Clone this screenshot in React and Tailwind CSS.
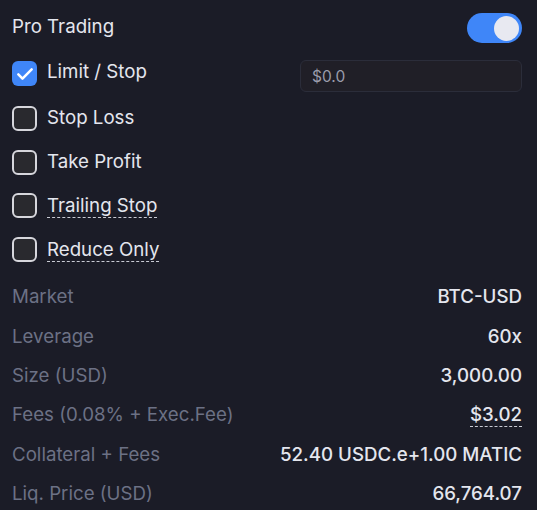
import React, { useState } from 'react'

const font = { fontFamily: 'Inter, "Noto Sans", sans-serif' }

const Check = ({ checked, onChange }) => (
  <button
    type="button"
    onClick={onChange}
    className={`w-[25px] h-[25px] shrink-0 rounded-[6px] flex items-center justify-center ${
      checked ? 'bg-[#3f86f8]' : 'bg-[#29292e] border-2 border-[#d6d6dc]'
    }`}
  >
    {checked && (
      <svg width="20" height="20" viewBox="0 0 24 24" fill="none" stroke="#ffffff" strokeWidth="3" strokeLinecap="round" strokeLinejoin="round">
        <path d="M4 12.5l5 5L20 6.5" />
      </svg>
    )}
  </button>
)

const Row = ({ label, value, dashed }) => (
  <div className="flex items-center justify-between h-[39.4px]">
    <span className="text-[#6c7185]">{label}</span>
    <span className={`text-[#e4e6ee] font-medium ${dashed ? 'border-b border-dashed border-[#c9cbd4] leading-[22px]' : ''}`}>
      {value}
    </span>
  </div>
)

const App = () => {
  const [pro, setPro] = useState(true)
  const [opts, setOpts] = useState({ limit: true, sl: false, tp: false, trailing: false, reduce: false })
  const toggle = (k) => setOpts({ ...opts, [k]: !opts[k] })

  const items = [
    { key: 'sl', label: 'Stop Loss' },
    { key: 'tp', label: 'Take Profit' },
    { key: 'trailing', label: 'Trailing Stop', dashed: true },
    { key: 'reduce', label: 'Reduce Only', dashed: true },
  ]

  return (
    <div className="min-h-screen w-full bg-[#1b1c27] pl-[12px] pr-[15px] pt-[13px] text-[18.7px]" style={font}>
      {/* Header */}
      <div className="flex items-center justify-between h-[30px]">
        <span className="text-[#e4e6ee] -mt-[1px]">Pro Trading</span>
        <button
          type="button"
          onClick={() => setPro(!pro)}
          className={`w-[55px] h-[30px] rounded-full flex items-center px-[3px] ${pro ? 'bg-[#3f86f8] justify-end' : 'bg-[#3a3b48] justify-start'}`}
        >
          <span className="w-[25px] h-[25px] rounded-full bg-[#e8e9f1]" />
        </button>
      </div>

      {/* Limit / Stop */}
      <div className="flex items-start justify-between mt-[17px] h-[32px]">
        <div className="flex items-center gap-[10px] mt-[1px] h-[25px]">
          <Check checked={opts.limit} onChange={() => toggle('limit')} />
          <span className="text-[#e4e6ee] -mt-[2px]">Limit / Stop</span>
        </div>
        <input
          placeholder="$0.0"
          className="w-[222px] h-[32px] rounded-[6px] bg-[#201f27] border border-[#2b2d3a] px-[11px] text-[15.5px] text-[#e4e6ee] placeholder-[#9a9cab] outline-none"
        />
      </div>

      {/* Options */}
      <div className="flex flex-col mt-[14px] gap-[18.5px]">
        {items.map((it) => (
          <div key={it.key} className="flex items-center gap-[10px] h-[25px]">
            <Check checked={opts[it.key]} onChange={() => toggle(it.key)} />
            <span className={`text-[#e4e6ee] ${it.dashed ? 'border-b border-dashed border-[#c9cbd4] leading-[22px] mt-[2px]' : ''}`}>
              {it.label}
            </span>
          </div>
        ))}
      </div>

      {/* Summary */}
      <div className="flex flex-col mt-[16px]">
        <Row label="Market" value="BTC-USD" />
        <Row label="Leverage" value="60x" />
        <Row label="Size (USD)" value="3,000.00" />
        <Row label="Fees (0.08% + Exec.Fee)" value="$3.02" dashed />
        <Row label="Collateral + Fees" value="52.40 USDC.e+1.00 MATIC" />
        <Row label="Liq. Price (USD)" value="66,764.07" />
      </div>
    </div>
  )
}

export default App
